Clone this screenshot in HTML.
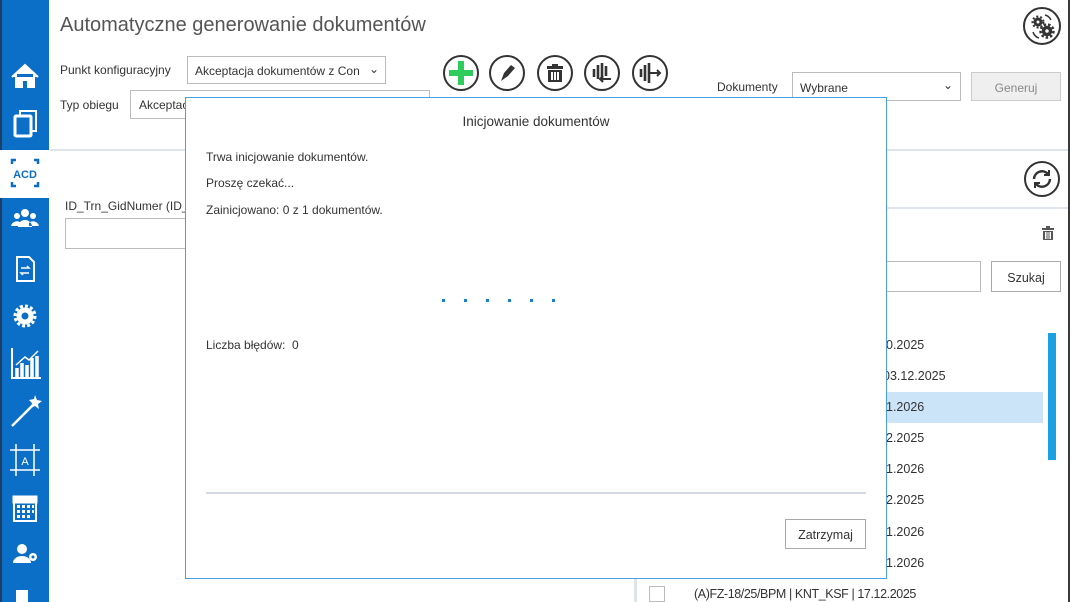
<!DOCTYPE html>
<html><head><meta charset="utf-8"><style>
*{box-sizing:border-box;margin:0;padding:0}
body{width:1072px;height:602px;position:relative;overflow:hidden;background:#fff;font-family:"Liberation Sans",sans-serif;color:#333;font-size:12px}
.a{position:absolute}
.sb{left:0;top:0;width:49px;height:602px;background:#0b6fc7;border-left:2px solid #1d3f66}
.sel{border:1px solid #bbb;background:#fff}
.circ{width:36px;height:36px;border:2px solid #333;border-radius:50%;background:#fff}
.row{position:absolute;left:886px;font-size:12.5px;color:#333}
</style></head><body>
<div class="a sb"></div>
<div class="a" style="left:0;top:150px;width:49px;height:48px;background:#fff"></div>
<svg class="a" style="left:0;top:0" width="50" height="602" fill="none" stroke="#fff" stroke-width="3">
<path d="M12 77 L25 65 L38 77 M16 74 V87 H22 V80 H28 V87 H34 V74" fill="#fff" stroke-width="2"/>
<rect x="15" y="116" width="16" height="20" rx="1"/><path d="M20 116 V111 H36 V131 H31" stroke-width="2"/>
<path d="M12 164 V160 H16 M34 160 H38 V164 M12 182 V186 H16 M34 186 H38 V182" stroke="#0b6fc7" stroke-width="2.5"/>
<text x="25" y="178" font-size="11" font-weight="bold" fill="#0b6fc7" stroke="none" text-anchor="middle" font-family="Liberation Sans">ACD</text>
<g fill="#fff" stroke="none"><circle cx="25" cy="213" r="4"/><circle cx="17" cy="216" r="3"/><circle cx="33" cy="216" r="3"/><path d="M18 227 a7 7 0 0 1 14 0z M11 226 a6 6 0 0 1 10 -3 v3z M39 226 a6 6 0 0 0 -10 -3 v3z"/></g>
<path d="M17 257 H29 L34 262 V281 H17Z" stroke-width="2"/><path d="M21 268 h8 l-2 -2 M29 273 h-8 l2 2" stroke-width="1.5"/>
<circle cx="25" cy="316" r="6" stroke-width="5"/><circle cx="25" cy="316" r="10" stroke-width="3" stroke-dasharray="3 2.2"/>
<path d="M12 348 V378 H41" stroke-width="2"/><path d="M17 377 V368 M22 377 V363 M27 377 V365 M32 377 V358 M37 377 V356" stroke-width="3.5"/><path d="M16 365 L25 357 L29 360 L38 351" stroke-width="1.5"/>
<path d="M12 426 L34 404" stroke-width="2.5"/><path d="M35 395 l2 5 5 1 -4 3 1 5 -4 -3 -4 2 1 -5 -3 -3 5 -1z" fill="#fff" stroke="none"/>
<path d="M10 450 H40 M10 470 H40 M16 444 V476 M34 444 V476" stroke-width="1.5"/><rect x="16" y="450" width="18" height="20" stroke-width="1"/><text x="25" y="465" font-size="11" fill="#fff" stroke="none" text-anchor="middle">A</text>
<rect x="14" y="497" width="22" height="24" stroke-width="2"/><rect x="14" y="497" width="22" height="5" fill="#fff"/><g fill="#fff" stroke="none"><rect x="17" y="505" width="3" height="3"/><rect x="22" y="505" width="3" height="3"/><rect x="27" y="505" width="3" height="3"/><rect x="32" y="505" width="2" height="3"/><rect x="17" y="510" width="3" height="3"/><rect x="22" y="510" width="3" height="3"/><rect x="27" y="510" width="3" height="3"/><rect x="32" y="510" width="2" height="3"/><rect x="17" y="515" width="3" height="3"/><rect x="22" y="515" width="3" height="3"/><rect x="27" y="515" width="3" height="3"/></g>
<g fill="#fff" stroke="none"><circle cx="22" cy="549" r="5"/><path d="M13 563 a9 7 0 0 1 18 0z"/><circle cx="33" cy="557" r="4"/></g><circle cx="33" cy="557" r="1.5" fill="#0b6fc7" stroke="none"/>
<rect x="16" y="590" width="12" height="14" fill="#fff" stroke="none"/>
</svg>
<div class="a" style="left:1068px;top:0;width:2px;height:602px;background:#3a3a3a"></div>

<div class="a" style="left:60px;top:14px;font-size:20px;color:#555">Automatyczne generowanie dokumentów</div>
<div class="a" style="left:60px;top:63px">Punkt konfiguracyjny</div>
<div class="a sel" style="left:187px;top:56px;width:199px;height:28px;padding:7px 7px;overflow:hidden;white-space:nowrap">Akceptacja dokumentów z Con<span style="position:absolute;right:0;top:0;width:22px;height:26px;background:#fff;padding:5px 6px">&#8964;</span></div>
<div class="a" style="left:60px;top:98px">Typ obiegu</div>
<div class="a sel" style="left:130px;top:90px;width:300px;height:29px;padding:7px 8px">Akceptac</div>

<div class="a circ" style="left:443px;top:55px"></div><div class="a" style="left:449px;top:70px;width:24px;height:6px;background:#2ecc5a"></div><div class="a" style="left:458px;top:61px;width:6px;height:24px;background:#2ecc5a"></div>
<div class="a circ" style="left:489px;top:55px"></div>
<svg class="a" style="left:489px;top:55px" width="36" height="36"><path d="M12 26 L15 18 L22 10 L26 13 L19 21Z" fill="#333"/></svg>
<div class="a circ" style="left:537px;top:55px"></div>
<svg class="a" style="left:537px;top:55px" width="36" height="36" fill="#333"><rect x="10" y="11" width="16" height="3"/><rect x="15" y="9" width="6" height="2"/><path d="M11 15 H25 V27 H11Z M14 17 V25 H16 V17Z M17 17 V25 H19 V17Z M20 17 V25 H22 V17Z" fill-rule="evenodd"/></svg>
<div class="a circ" style="left:584px;top:55px"></div>
<svg class="a" style="left:584px;top:55px" width="36" height="36" stroke="#333" stroke-width="2.6" fill="none"><path d="M10 14 V22 M14 10 V24 M18 8 V26 M22 11 V21"/><path d="M27 24 H16 M19 21 L16 24 L19 27" stroke-width="2"/></svg>
<div class="a circ" style="left:632px;top:55px"></div>
<svg class="a" style="left:632px;top:55px" width="36" height="36" stroke="#333" stroke-width="2.6" fill="none"><path d="M9 14 V22 M13 10 V26 M17 8 V28"/><path d="M18 18 H28 M25 15 L28 18 L25 21" stroke-width="2"/></svg>

<div class="a" style="left:717px;top:80px">Dokumenty</div>
<div class="a sel" style="left:792px;top:72px;width:169px;height:29px;padding:8px 7px">Wybrane<span style="position:absolute;right:7px;top:5px">&#8964;</span></div>
<div class="a" style="left:971px;top:72px;width:90px;height:29px;background:#efefef;border:1px solid #ccc;color:#888;text-align:center;padding-top:8px">Generuj</div>

<div class="a circ" style="left:1023px;top:7px;width:38px;height:38px"></div>
<svg class="a" style="left:1023px;top:7px" width="38" height="38" fill="none" stroke="#333"><circle cx="15" cy="15" r="3" stroke-width="3"/><circle cx="15" cy="15" r="5.5" stroke-width="2" stroke-dasharray="2 2"/><circle cx="24" cy="24" r="3.5" stroke-width="3.5"/><circle cx="24" cy="24" r="6.5" stroke-width="2.5" stroke-dasharray="2.5 2"/><path d="M10 25 a9 9 0 0 0 6 6 M28 13 a9 9 0 0 0 -6 -5" stroke-width="1.5"/></svg>

<div class="a" style="left:50px;top:149px;width:1018px;height:2px;background:#dfe3ea"></div>
<div class="a circ" style="left:1024px;top:161px"></div>
<svg class="a" style="left:1024px;top:161px" width="36" height="36" fill="none" stroke="#333" stroke-width="2.5"><path d="M10 18 a8 8 0 0 1 14 -5 M26 18 a8 8 0 0 1 -14 5"/><path d="M25 9 V14 H20 M11 27 V22 H16" stroke-width="2"/></svg>
<div class="a" style="left:886px;top:207px;width:182px;height:2px;background:#dfe3ea"></div>
<svg class="a" style="left:1042px;top:226px" width="12" height="14" fill="#555"><rect x="0" y="2" width="12" height="2"/><rect x="4" y="0" width="4" height="2"/><path d="M1 5 H11 V14 H1Z M3 6 V13 H4.5 V6Z M5.5 6 V13 H6.5 V6Z M7.5 6 V13 H9 V6Z" fill-rule="evenodd"/></svg>
<div class="a sel" style="left:870px;top:261px;width:111px;height:31px"></div>
<div class="a" style="left:991px;top:261px;width:70px;height:31px;border:1px solid #aaa;background:#fff;text-align:center;padding-top:9px;font-size:12.5px">Szukaj</div>

<div class="a" style="left:65px;top:199px">ID_Trn_GidNumer (ID_</div>
<div class="a sel" style="left:65px;top:218px;width:130px;height:31px"></div>

<div class="a" style="left:634px;top:300px;width:3px;height:302px;background:#dfe3ea"></div>
<div class="a" style="left:640px;top:392px;width:403px;height:31px;background:#cce4f7"></div>
<div class="a" style="left:1048px;top:333px;width:8px;height:127px;background:#1ba1e2"></div>
<div class="row" style="top:338px">0.2025</div>
<div class="row" style="top:369px;left:883px">03.12.2025</div>
<div class="row" style="top:400px">1.2026</div>
<div class="row" style="top:431px">2.2025</div>
<div class="row" style="top:462px">1.2026</div>
<div class="row" style="top:493px">2.2025</div>
<div class="row" style="top:525px">1.2026</div>
<div class="row" style="top:556px">1.2026</div>
<div class="a" style="left:649px;top:586px;width:16px;height:16px;border:1px solid #bbb"></div>
<div class="a" style="left:694px;top:587px;font-size:12.5px;letter-spacing:-0.4px">(A)FZ-18/25/BPM | KNT_KSF | 17.12.2025</div>

<div class="a" style="left:185px;top:97px;width:702px;height:482px;background:#fff;border:1px solid #4a9fe0"></div>
<div class="a" style="left:185px;top:114px;width:702px;text-align:center;font-size:13.5px">Inicjowanie dokumentów</div>
<div class="a" style="left:206px;top:150px">Trwa inicjowanie dokumentów.</div>
<div class="a" style="left:206px;top:176px">Proszę czekać...</div>
<div class="a" style="left:206px;top:203px">Zainicjowano: 0 z 1 dokumentów.</div>
<svg class="a" style="left:440px;top:298px" width="120" height="6" fill="#1a7fd0"><rect x="2" y="1" width="3" height="3"/><rect x="24" y="1" width="3" height="3"/><rect x="46" y="1" width="3" height="3"/><rect x="68" y="1" width="3" height="3"/><rect x="90" y="1" width="3" height="3"/><rect x="112" y="1" width="3" height="3"/></svg>
<div class="a" style="left:206px;top:338px">Liczba błędów:&nbsp; 0</div>
<div class="a" style="left:206px;top:492px;width:660px;height:2px;background:#d5d9e2"></div>
<div class="a" style="left:785px;top:519px;width:81px;height:30px;border:1px solid #aaa;text-align:center;padding-top:8px;font-size:12.5px">Zatrzymaj</div>
</body></html>
